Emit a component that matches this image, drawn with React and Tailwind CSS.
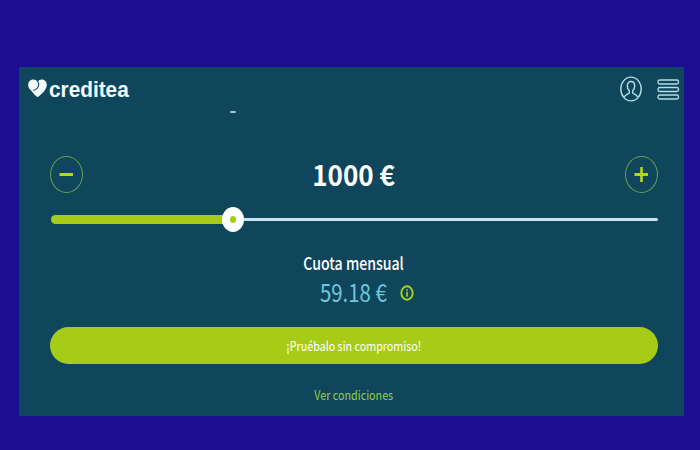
import { useState } from "react";

const MIN = 0;
const MAX = 3333;

function Logo() {
  return (
    <div className="flex h-5 items-center">
      <svg width="19" height="19" viewBox="0 0 18 18" className="mr-0.5 -translate-y-px">
        <path
          d="M9 17.4C6.8 15.6 4.8 13.5 3 11 1 9.200 .2 7.500 .2 5.600 .2 2.700 2.200 .5 4.900 .5 6.700 .5 8.200 1.300 9 2.800 9.900 1.300 11.300 .5 13 .5 15.800 .5 17.800 2.700 17.800 5.600 17.800 9.600 13.500 14 9 17.400Z"
          fill="#f4fbfc"
        />
        <path
          d="M9.300 2.300C10.400 4.200 10.300 6.600 9.100 8.300 8 9.900 6.400 10.700 4.700 10.700"
          fill="none"
          stroke="#10465b"
          strokeWidth="1"
        />
      </svg>
      <span className="origin-left scale-x-[0.945] font-['Liberation_Sans',sans-serif] text-[22px] leading-5 font-bold text-[#f4fbfc]">
        creditea
      </span>
    </div>
  );
}

function UserIcon() {
  return (
    <svg width="23" height="27" viewBox="0 0 23 27" fill="none" stroke="#b5dde6" strokeWidth="1.400">
      <ellipse cx="11" cy="13" rx="10.200" ry="11.900" />
      <path d="M4.200 21C5.500 18.500 8 17.800 9.300 17V14.800C8 13.700 7.300 12 7.300 10 7.300 7.300 8.800 5.500 11 5.500S14.700 7.300 14.700 10C14.700 12 14 13.700 12.700 14.800V17C14 17.800 16.500 18.500 17.800 21" />
    </svg>
  );
}

function MenuIcon() {
  return (
    <svg width="23" height="22" viewBox="0 0 23 22" fill="none" stroke="#b5dde6" strokeWidth="1.300">
      <rect x="1" y="1" width="20.500" height="4" rx="1.800" />
      <rect x="1" y="8.500" width="20.500" height="4" rx="1.800" />
      <rect x="1" y="16" width="20.500" height="4" rx="1.800" />
    </svg>
  );
}

function RoundButton({ plus, onClick }) {
  return (
    <button
      onClick={onClick}
      aria-label={plus ? "Aumentar" : "Reducir"}
      className="flex h-[37px] w-[33px] items-center justify-center rounded-[50%] border border-[#62a34f]"
    >
      <svg width="15" height="17" viewBox="0 0 15 17" stroke="#b4d817" strokeWidth="3">
        <path d="M.5 8.500H14" />
        {plus && <path d="M7.500 1V16" strokeWidth="2.600" />}
      </svg>
    </button>
  );
}

function InfoIcon() {
  return (
    <svg width="14" height="16" viewBox="0 0 14 16" fill="none" stroke="#a7cf1b">
      <ellipse cx="7" cy="8" rx="5.700" ry="6.700" strokeWidth="1.900" />
      <path d="M7 6.800V11.800M7 4.200V5.800" strokeWidth="1.700" />
    </svg>
  );
}

export default function App() {
  const [amount, setAmount] = useState(1000);
  const percent = ((amount - MIN) / (MAX - MIN)) * 100;

  return (
    <div className="h-[450px] w-[700px] overflow-hidden bg-[#1b0e91] pt-[67px] pl-[19px] font-['Noto_Sans_CJK_SC',sans-serif]">
      <main className="flex h-[349px] w-[665px] flex-col bg-[#10465b]">
        {/* Cabecera */}
        <header className="flex h-11 items-center justify-between pt-px pr-1 pl-[9px]">
          <Logo />
          <div className="flex items-center gap-[14px]">
            <UserIcon />
            <MenuIcon />
          </div>
        </header>
        <div className="ml-[211px] h-0.5 w-[6px] rounded-full bg-[#9fc9d4]" />

        <section className="flex flex-col pr-[26px] pl-[31px]">
          {/* Importe */}
          <div className="mt-[42px] flex h-[38px] items-center justify-between">
            <RoundButton onClick={() => setAmount(Math.max(MIN, amount - 100))} />
            <span className="mb-px scale-x-[0.93] pr-px text-[28px] leading-[34px] font-bold text-white">{amount} €</span>
            <RoundButton plus onClick={() => setAmount(Math.min(MAX, amount + 100))} />
          </div>

          {/* Barra deslizante */}
          <div className="mt-[14px] flex h-[25px] items-center pl-px">
            <div className="-mr-[11px] h-[9px] rounded-l-full bg-[#a7cc18]" style={{ width: `${percent}%` }} />
            <div className="z-10 flex h-[25px] w-[22px] shrink-0 items-center justify-center rounded-[50%] bg-white">
              <div className="h-[7px] w-[6px] rounded-full bg-[#a7cc18]" />
            </div>
            <div className="h-[3px] flex-1 rounded-r-full bg-[#cbe5ee]" />
          </div>

          {/* Cuota */}
          <div className="mt-[19px] flex h-6 justify-center">
            <span className="scale-x-[0.83] text-[17px] leading-6 font-medium text-white">Cuota mensual</span>
          </div>
          <div className="mt-0.5 flex h-8 items-center justify-center gap-[7px] pl-[20px]">
            <span className="mb-0.5 scale-x-[0.85] text-[24px] leading-8 text-[#72c9dc]">59.18 €</span>
            <InfoIcon />
          </div>

          <button className="mt-[18px] flex h-[37px] items-center justify-center rounded-[20px] bg-[#a7cc18]">
            <span className="scale-x-[0.825] text-[13px] leading-5 text-white">¡Pruébalo sin compromiso!</span>
          </button>
          <a href="#" className="mt-[21px] flex justify-center text-[13px] leading-5 text-[#94cf48]">
            <span className="scale-x-[0.825]">Ver condiciones</span>
          </a>
        </section>
      </main>
    </div>
  );
}
